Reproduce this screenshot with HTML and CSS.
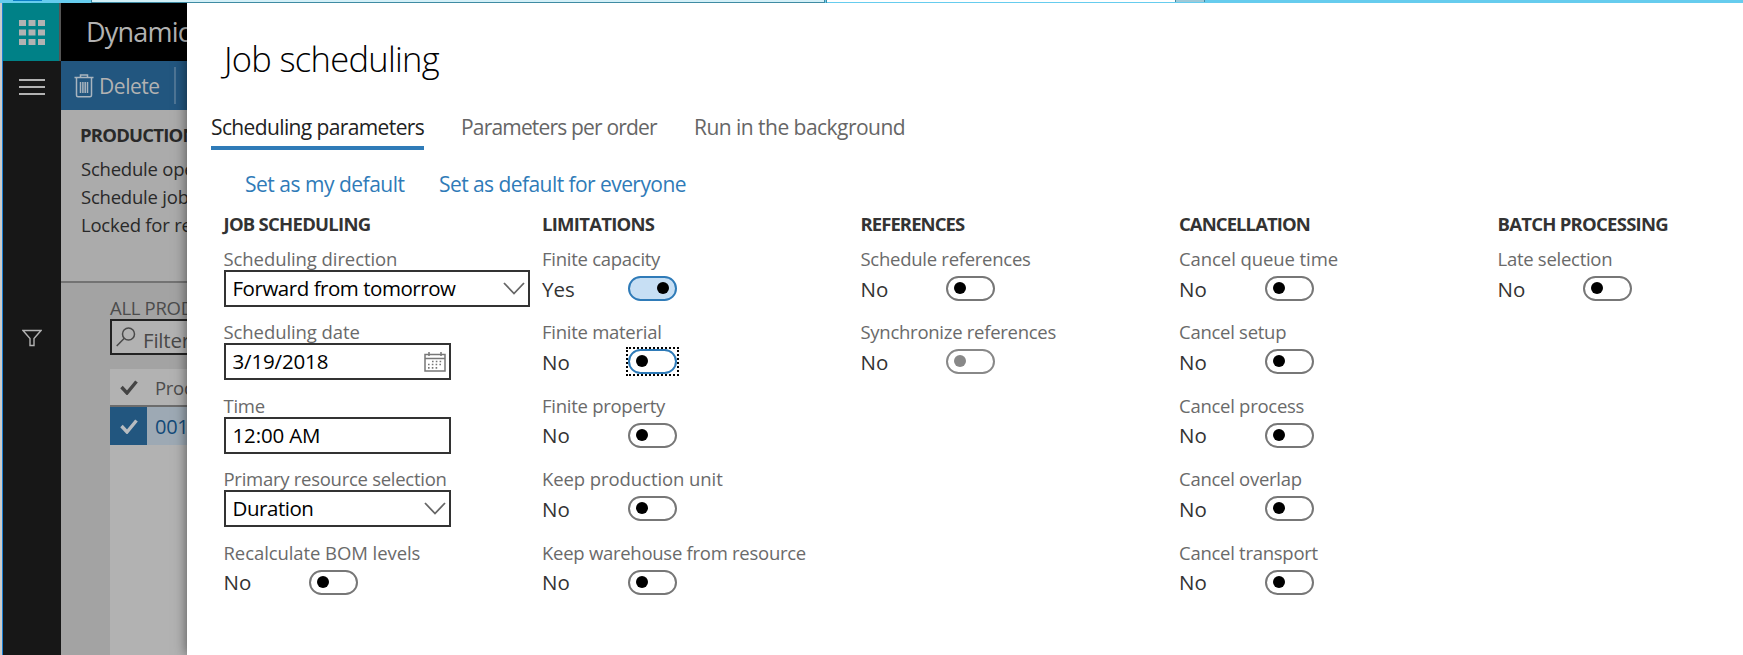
FILE: index.html
```html
<!DOCTYPE html>
<html lang="en">
<head>
<meta charset="utf-8">
<title>Job scheduling</title>
<link rel="stylesheet" href="styles.css">
</head>
<body>
<div class="screen">
  <div class="browser-strip">
    <div class="strip-start"><span class="strip-mark"></span></div>
    <div class="strip-address"></div>
    <div class="strip-gap"></div>
    <div class="strip-tab"></div>
    <div class="strip-newtab"></div>
  </div>
  <div class="window">
    <nav class="rail">
      <div class="waffle">
        <svg width="26" height="25" viewBox="0 0 26 25" fill="#b2b2b2"><path d="M0 0h7v6H0zM9.500 0h7v6h-7zM19 0h7v6h-7zM0 9.500h7v6H0zM9.500 9.500h7v6h-7zM19 9.500h7v6h-7zM0 19h7v6H0zM9.500 19h7v6h-7zM19 19h7v6h-7z"/></svg>
      </div>
      <div class="burger"><svg width="26" height="16" viewBox="0 0 26 16"><path d="M0 1h26M0 8h26M0 15h26" stroke="#b2b2b2" stroke-width="1.800"/></svg></div>
      <div class="funnel"><svg width="20" height="18" viewBox="0 0 20 18" fill="none" stroke="#b2b2b2" stroke-width="1.400"><path d="M1 1.500h18l-7 8v7H8v-7z"/></svg></div>
    </nav>
    <main class="page">
      <header class="brand">Dynamics 365</header>
      <div class="actions">
        <svg width="20" height="24" viewBox="0 0 20 24" fill="none" stroke="#a9b5bf" stroke-width="1.500"><path d="M.5 3.500h19M6.500 3V1h7v2M2.500 4v17.200q0 1.500 1.500 1.500h12q1.500 0 1.500-1.500V4M6.500 8v11M8.900 8v11M11.200 8v11M13.500 8v11"/></svg>
        <span>Delete</span>
        <i class="divider"></i>
      </div>
      <section class="related">
        <h3>PRODUCTION</h3>
        <p>Schedule operations</p>
        <p>Schedule jobs</p>
        <p>Locked for reset</p>
      </section>
      <section class="orders">
        <h4>ALL PRODUCTION ORDERS</h4>
        <div class="filter">
          <svg width="20" height="20" viewBox="0 0 20 20" fill="none" stroke="#4a4a4a" stroke-width="1.500"><circle cx="12.500" cy="7" r="6"/><path d="M8.300 11.300L.7 19"/></svg>
          <span>Filter</span>
        </div>
        <div class="list">
          <div class="row head"><span class="tick"><svg width="18" height="15" viewBox="0 0 18 15" fill="none" stroke="#444" stroke-width="3.400"><path d="M1.500 7l5.500 6L16.500 1.500"/></svg></span><span class="cell">Production</span></div>
          <div class="row picked"><span class="tick"><svg width="18" height="15" viewBox="0 0 18 15" fill="none" stroke="#b8bcc0" stroke-width="3.400"><path d="M1.500 7l5.500 6L16.500 1.500"/></svg></span><span class="cell">001</span></div>
        </div>
      </section>
    </main>
    <section class="dialog">
      <h1>Job scheduling</h1>
      <div class="tabs">
        <span class="tab active">Scheduling parameters</span>
        <span class="tab order">Parameters per order</span>
        <span class="tab background">Run in the background</span>
      </div>
      <div class="links"><a class="mine">Set as my default</a><a>Set as default for everyone</a></div>
      <div class="columns">
        <div class="group">
          <h2>JOB SCHEDULING</h2>
          <div class="field"><label class="airy">Scheduling direction</label><div class="box wide"><span>Forward from tomorrow</span><svg width="22" height="13" viewBox="0 0 22 13" fill="none" stroke="#666" stroke-width="1.800"><path d="M1 1l10 10.500L21 1"/></svg></div></div>
          <div class="field"><label class="airy">Scheduling date</label><div class="box"><span class="num">3/19/2018</span><svg width="22" height="20" viewBox="0 0 22 20" fill="none" stroke="#777" stroke-width="1.500"><path d="M1 2.500h20v16.500H1zM1 6.500h20M5 0v4M17 0v4"/><path d="M8 9.500h11M4 12.500h15M4 15.800h11" stroke-width="1.700" stroke-dasharray="1.600 2.200"/></svg></div></div>
          <div class="field"><label>Time</label><div class="box"><span class="num">12:00 AM</span></div></div>
          <div class="field"><label>Primary resource selection</label><div class="box"><span>Duration</span><svg width="22" height="13" viewBox="0 0 22 13" fill="none" stroke="#666" stroke-width="1.800"><path d="M1 1l10 10.500L21 1"/></svg></div></div>
          <div class="field"><label class="airy">Recalculate BOM levels</label><div class="choice"><span>No</span><i class="toggle"></i></div></div>
        </div>
        <div class="group">
          <h2>LIMITATIONS</h2>
          <div class="field"><label>Finite capacity</label><div class="choice"><span>Yes</span><i class="toggle on"></i></div></div>
          <div class="field"><label>Finite material</label><div class="choice"><span>No</span><i class="toggle focused"></i></div></div>
          <div class="field"><label>Finite property</label><div class="choice"><span>No</span><i class="toggle"></i></div></div>
          <div class="field"><label class="airy">Keep production unit</label><div class="choice"><span>No</span><i class="toggle"></i></div></div>
          <div class="field"><label>Keep warehouse from resource</label><div class="choice"><span>No</span><i class="toggle"></i></div></div>
        </div>
        <div class="group">
          <h2 class="tight">REFERENCES</h2>
          <div class="field"><label>Schedule references</label><div class="choice"><span>No</span><i class="toggle"></i></div></div>
          <div class="field"><label>Synchronize references</label><div class="choice"><span>No</span><i class="toggle disabled"></i></div></div>
        </div>
        <div class="group">
          <h2 class="tight">CANCELLATION</h2>
          <div class="field"><label class="airy">Cancel queue time</label><div class="choice"><span>No</span><i class="toggle"></i></div></div>
          <div class="field"><label>Cancel setup</label><div class="choice"><span>No</span><i class="toggle"></i></div></div>
          <div class="field"><label>Cancel process</label><div class="choice"><span>No</span><i class="toggle"></i></div></div>
          <div class="field"><label>Cancel overlap</label><div class="choice"><span>No</span><i class="toggle"></i></div></div>
          <div class="field"><label>Cancel transport</label><div class="choice"><span>No</span><i class="toggle"></i></div></div>
        </div>
        <div class="group">
          <h2>BATCH PROCESSING</h2>
          <div class="field"><label>Late selection</label><div class="choice"><span>No</span><i class="toggle"></i></div></div>
        </div>
      </div>
    </section>
  </div>
</div>
</body>
</html>
```

FILE: styles.css
```css
* { box-sizing: border-box; }
body { margin: 0; font-family: "Open Sans", "Noto Sans", sans-serif; color: #333; overflow: hidden; }
h1, h2, h3, h4, p { margin: 0; }
svg { display: block; flex: none; }
.screen { width: 1743px; height: 655px; display: flex; flex-direction: column; background: #fff; overflow: hidden; }

.browser-strip { flex: none; display: flex; height: 3px; background: #66ccee; }
.strip-start { width: 91px; padding-left: 13px; }
.strip-mark { display: block; width: 29px; height: 1px; background: #0b7fc7; }
.strip-address { width: 734px; background: #d3f0f8; border-left: 1px solid #3f8ba3; border-right: 1px solid #3f8ba3; border-bottom: 1px solid #3f8ba3; }
.strip-gap { width: 2px; border-right: 1px solid #3f8ba3; }
.strip-tab { width: 348px; height: 2px; background: #fff; }
.strip-newtab { width: 30px; height: 2px; background: #9ec9d8; border-left: 1px solid #3f8ba3; border-right: 1px solid #3f8ba3; }

.window { flex: 1; min-height: 0; display: flex; border-left: 2px solid #ccc; }
.rail { width: 59px; flex: none; background: #171717; border-left: 1px solid #1b7fd2; }
.waffle { height: 58px; background: #008187; border-right: 2px solid #555; display: flex; align-items: center; padding-left: 16px; }
.burger { height: 52px; display: flex; align-items: center; padding-left: 16px; }
.funnel { padding: 216px 0 0 19px; }

.page { width: 126px; flex: none; overflow: hidden; background: #a3a3a3; display: flex; flex-direction: column; white-space: nowrap; }
.brand { height: 58px; flex: none; background: #000; color: #b2b2b2; font-size: 27px; line-height: 58px; padding-left: 25px; letter-spacing: -.8px; }
.actions { height: 49px; flex: none; background: #22567f; color: #b2b2b2; display: flex; align-items: center; padding-left: 13px; font-size: 21px; letter-spacing: -.45px; }
.actions span { margin-left: 5px; line-height: 49px; padding-top: 1px; }
.divider { width: 2px; height: 37px; background: #4e7595; margin-left: 14px; flex: none; }
.related { height: 173px; flex: none; background: #ababab; border-bottom: 2px solid #737373; padding: 12px 0 0 19px; color: #292929; }
.related h3 { font-size: 18.5px; line-height: 26px; margin-bottom: 7px; letter-spacing: -.8px; }
.related p { font-size: 18.5px; line-height: 28px; letter-spacing: -.22px; padding-left: 1px; }
.orders { flex: 1; padding: 13px 0 0 49px; display: flex; flex-direction: column; }
.orders h4 { font-weight: 400; font-size: 18.5px; line-height: 23px; color: #4c4c4c; letter-spacing: -.3px; }
.filter { height: 36px; flex: none; width: 220px; border: 2px solid #222; background: #b2b2b2; display: flex; align-items: center; padding-left: 4px; margin-bottom: 14px; color: #484848; font-size: 20.5px; letter-spacing: -.2px; }
.filter span { margin: 6px 0 0 7px; line-height: 28px; }
.list { flex: 1; background: #b2b2b2; }
.row { display: flex; height: 38px; }
.head { border-bottom: 2px solid #6c6c6c; color: #4c4c4c; font-size: 18.5px; line-height: 37px; letter-spacing: -.3px; }
.tick { width: 37px; flex: none; display: flex; align-items: center; padding-left: 10px; }
.cell { padding-left: 8px; flex: none; }
.picked { background: #9da9b4; color: #124a78; font-size: 20px; line-height: 39px; letter-spacing: -.3px; }
.picked .tick { background: #22567f; }

.dialog { flex: 1; position: relative; background: #fff; padding: 33px 0 0 24px; box-shadow: 0 0 12px rgba(0, 0, 0, .55); clip-path: inset(0 0 0 -20px); }
h1 { font-size: 34.5px; font-weight: 300; line-height: 46px; letter-spacing: -.7px; color: #000; padding-left: 13px; }
.tabs { display: flex; gap: 37px; margin-top: 29px; font-size: 21px; line-height: 33px; letter-spacing: -.62px; color: #666; white-space: nowrap; }
.tab { height: 39px; flex: none; }
.active { width: 213px; color: #222; border-bottom: 4px solid #2f7bb8; }
.order { width: 196px; letter-spacing: -.82px; }
.background { letter-spacing: -.53px; }
.links { display: flex; gap: 33px; padding: 18px 0 0 34px; color: #2f7bb8; font-size: 21px; line-height: 32px; letter-spacing: -.56px; white-space: nowrap; }
.mine { width: 161px; letter-spacing: -.49px; }
.columns { display: grid; grid-template-columns: repeat(5, 318.5px); padding-left: 12.500px; margin-top: 13px; width: max-content; }
h2 { font-size: 18.5px; line-height: 22px; letter-spacing: -.74px; color: #333; margin-bottom: 13px; }
h2.tight { letter-spacing: -.93px; }
.field { height: 73.400px; }
.field label { display: block; font-size: 18.5px; line-height: 22px; letter-spacing: -.27px; color: #6a6a6a; white-space: nowrap; }
.field label.airy { letter-spacing: -.08px; }
.box { position: relative; width: 227px; height: 37px; border: 2px solid #333; background: #fff; color: #000; display: flex; align-items: center; justify-content: space-between; padding: 0 3px 0 7px; font-size: 20.5px; line-height: 33px; letter-spacing: -.46px; white-space: nowrap; }
.box.wide { width: 306px; }
.box .num { letter-spacing: -.15px; }
.choice { height: 37px; display: flex; align-items: center; font-size: 20.5px; line-height: 37px; }
.choice span { width: 85.500px; padding-top: 1px; }
.toggle { position: relative; width: 49px; height: 25px; border: 2px solid #777; border-radius: 13px; display: flex; align-items: center; padding: 0 6px 1px; }
.toggle::before { content: ""; width: 12px; height: 12px; border-radius: 50%; background: #000; }
.on { justify-content: flex-end; background: #c7dff4; border-color: #2f7bb8; }
.focused { border-color: #2f7bb8; }
.focused::after { content: ""; position: absolute; inset: -4px; border: 2px dotted #000; }
.disabled { border-color: #888; }
.disabled::before { background: #888; }
```
